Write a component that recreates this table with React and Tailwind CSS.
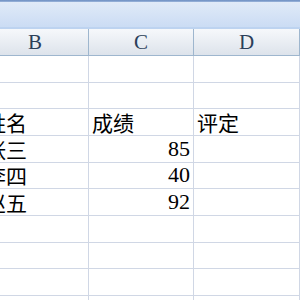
import React from "react";

// 表格数据：每行对应 B、C、D 三列
const rows = [
  { h: "h-[27px]", b: "", c: "", d: "" },
  { h: "h-[26px]", b: "", c: "", d: "" },
  { h: "h-[27px]", b: "姓名", c: "成绩", d: "评定" },
  { h: "h-[27px]", b: "张三", c: 85, d: "" },
  { h: "h-[26px]", b: "李四", c: 40, d: "" },
  { h: "h-[27px]", b: "赵五", c: 92, d: "" },
  { h: "h-[27px]", b: "", c: "", d: "" },
  { h: "h-[26px]", b: "", c: "", d: "" },
  { h: "h-[27px]", b: "", c: "", d: "" },
  { h: "h-[27px]", b: "", c: "", d: "" },
];

const cjk = "font-['Noto_Sans_CJK_SC',sans-serif]";
const serif = "font-['Liberation_Serif',serif]";
const widths = ["w-[107px]", "w-[105px]", "w-[106px]"];

const Cell = ({ value, width }) => {
  const isNum = typeof value === "number";
  return (
    <div
      className={`${width} shrink-0 h-full border-r border-[#d0d7e5] flex items-end px-[3px] pb-[0px] text-[21px] leading-[26px] text-black ${
        isNum ? `justify-end ${serif} text-[22px]` : cjk
      }`}
    >
      {value}
    </div>
  );
};

export default function App() {
  return (
    <div className="w-[300px] h-[300px] overflow-hidden bg-white">
      {/* 功能区底边 */}
      <div className="h-[2px] bg-gradient-to-b from-[#6a8cc0] to-[#9db6dc]" />
      <div className="h-[25px] bg-gradient-to-b from-[#e0eaf8] to-[#cbdcf4]" />
      <div className="h-[2px] bg-[#bdd3f0]" />

      {/* 列标题 */}
      <div className="flex ml-[-18px] h-[27px] border-b border-[#9eb6ce] bg-gradient-to-b from-[#f6f8fb] to-[#dde3eb]">
        {["B", "C", "D"].map((col, i) => (
          <div
            key={col}
            className={`${widths[i]} shrink-0 h-full border-r border-[#9eb6ce] flex items-center justify-center pt-[2px] ${serif} text-[21px] text-[#2b3f5a]`}
          >
            {col}
          </div>
        ))}
      </div>

      {/* 单元格 */}
      {rows.map((r, i) => (
        <div key={i} className={`flex ml-[-18px] ${r.h} border-b border-[#d0d7e5]`}>
          <Cell value={r.b} width={widths[0]} />
          <Cell value={r.c} width={widths[1]} />
          <Cell value={r.d} width={widths[2]} />
        </div>
      ))}
    </div>
  );
}
